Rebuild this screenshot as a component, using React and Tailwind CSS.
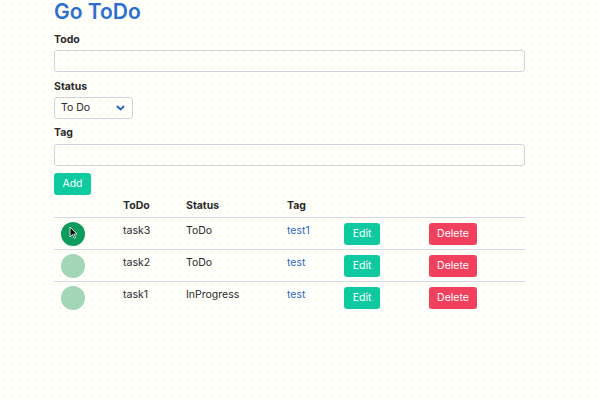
import React, { useState } from "react";

const todos = [
  { id: 3, name: "task3", status: "ToDo", tag: "test1", done: true },
  { id: 2, name: "task2", status: "ToDo", tag: "test", done: false },
  { id: 1, name: "task1", status: "InProgress", tag: "test", done: false },
];

const App = () => {
  const [todo, setTodo] = useState("");
  const [tag, setTag] = useState("");

  return (
    <div
      className="w-[600px] h-[400px] overflow-hidden bg-[#fffffb] bg-[radial-gradient(circle,#f8f2b8_0.6px,transparent_0.8px)] bg-[length:8px_8px] text-[#363636] pl-[54px] pr-[75px]"
      style={{ fontFamily: "Inter, 'Noto Sans', sans-serif" }}
    >
      {/* Title */}
      <h1 className="text-[21px] leading-[22px] font-semibold text-[#2d6fcf] pt-[1px]">
        Go ToDo
      </h1>

      {/* Todo */}
      <label className="block mt-[10px] text-[10.5px] leading-[13px] font-bold text-[#2a2a2a]">
        Todo
      </label>
      <input
        value={todo}
        onChange={(e) => setTodo(e.target.value)}
        className="block mt-[4px] w-full h-[22px] border border-[#d2d2dc] rounded-[3px] bg-transparent"
      />

      {/* Status */}
      <label className="block mt-[8px] text-[10.5px] leading-[13px] font-bold text-[#2a2a2a]">
        Status
      </label>
      <div className="mt-[4px] w-[79px] h-[22px] border border-[#d2d2dc] rounded-[3px] flex items-center justify-between pl-[6px] pr-[7px]">
        <span className="text-[10.5px] text-[#2a2a2a]">To Do</span>
        <svg width="9" height="6" viewBox="0 0 9 6" fill="none">
          <path d="M1 1l3.5 3.5L8 1" stroke="#2d5fc6" strokeWidth="1.8" />
        </svg>
      </div>

      {/* Tag */}
      <label className="block mt-[7px] text-[10.5px] leading-[13px] font-bold text-[#2a2a2a]">
        Tag
      </label>
      <input
        value={tag}
        onChange={(e) => setTag(e.target.value)}
        className="block mt-[5px] w-full h-[22px] border border-[#d2d2dc] rounded-[3px] bg-transparent"
      />

      <button className="mt-[7px] w-[37px] h-[22px] rounded-[3px] bg-[#0fc9a0] text-white text-[10.5px]">
        Add
      </button>

      {/* Table */}
      <div className="text-[10.5px]">
        <div className="grid grid-cols-[69px_63px_101px_57px_85px_1fr] h-[23px] items-center font-bold text-[#2a2a2a] border-b border-[#d6d6e4]">
          <div></div>
          <div>ToDo</div>
          <div>Status</div>
          <div>Tag</div>
          <div></div>
          <div></div>
        </div>
        {todos.map((t, i) => (
          <div
            key={t.id}
            className={`grid grid-cols-[69px_63px_101px_57px_85px_1fr] h-[32px] ${
              i < todos.length - 1 ? "border-b border-[#d6d6e4]" : ""
            }`}
          >
            <div className="pl-[7px] pt-[4px] relative">
              <div
                className={`w-[24px] h-[24px] rounded-full ${
                  t.done ? "bg-[#0e9c5c]" : "bg-[#a2d6b6]"
                }`}
              ></div>
              {t.done && (
                <svg
                  className="absolute left-[15px] top-[8px]"
                  width="9"
                  height="13"
                  viewBox="0 0 9 13"
                >
                  <path
                    d="M1 1v10l2.5-2.5 1.8 3.8 1.4-.7-1.8-3.6H8z"
                    fill="#111"
                    stroke="#fff"
                    strokeWidth="0.8"
                  />
                </svg>
              )}
            </div>
            <div className="pt-[5px] text-[#2a2a2a]">{t.name}</div>
            <div className="pt-[5px] text-[#2a2a2a]">{t.status}</div>
            <div className="pt-[5px] text-[#3566c4]">{t.tag}</div>
            <div className="pt-[5px]">
              <button className="w-[36px] h-[22px] rounded-[3px] bg-[#0fc9a0] text-white text-[10.5px]">
                Edit
              </button>
            </div>
            <div className="pt-[5px]">
              <button className="w-[48px] h-[22px] rounded-[3px] bg-[#f0405e] text-white text-[10.5px]">
                Delete
              </button>
            </div>
          </div>
        ))}
      </div>
    </div>
  );
};

export default App;
